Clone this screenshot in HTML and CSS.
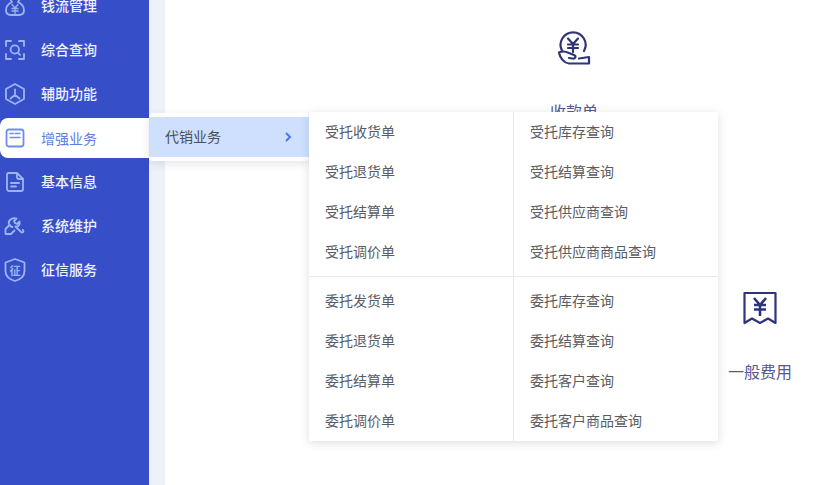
FILE: index.html
```html
<!DOCTYPE html>
<html lang="zh">
<head>
<meta charset="utf-8">
<title>增强业务</title>
<link rel="stylesheet" href="styles.css">
</head>
<body>
<div class="app">
  <nav class="sidebar">
    <a class="nav-item"><svg class="nav-icon" viewBox="0 0 22 22"><path d="M8 7C4 9 2 11.500 2 15c0 3 2 5 5 5h8c3 0 5-2 5-5 0-3.500-2-6-6-8l2-3H6Z"/><path class="fine" d="m8 9.500 3 3.500 3-3.500M8 13.500h6M8 16h6M11 13v5.500"/></svg><span>钱流管理</span></a>
    <a class="nav-item"><svg class="nav-icon" viewBox="0 0 22 22"><path d="M7 2H2v5M15 2h5v5M2 15v5h5M20 15v5h-5"/><circle cx="10.800" cy="10.500" r="4.200"/><path d="m14 13.800 2 2"/></svg><span>综合查询</span></a>
    <a class="nav-item"><svg class="nav-icon" viewBox="0 0 22 22"><path d="m11 1 9 5v10l-9 5-9-5V6Z"/><path d="M11 6.500V12M11 12l-4.500 3.500M11 12l4.500 3.500"/></svg><span>辅助功能</span></a>
    <a class="nav-item is-active"><span class="active-pill"><svg class="nav-icon" viewBox="0 0 22 22"><rect x="2.500" y="2.500" width="17" height="17" rx="2.500"/><path class="fine" d="M6 6.500h3.300M11 6.500h5M6 10.500h10"/></svg><span>增强业务</span></span></a>
    <a class="nav-item"><svg class="nav-icon" viewBox="0 0 22 22"><path d="M4.500 2H13l6 6v10a2 2 0 0 1-2 2H5a2 2 0 0 1-2-2V3.500A1.500 1.500 0 0 1 4.500 2Z"/><path d="M13 2.500V6a2 2 0 0 0 2 2h4M7 12h8M7 15.500h5"/></svg><span>基本信息</span></a>
    <a class="nav-item"><svg class="nav-icon" viewBox="0 0 22 22"><path d="m12.500 3.500-2.500 2.500 1 2 2 1 2.500-2.500c1 3-1.500 5.500-4 5L17 17c1.500 1.500 3.300-.5 2-2l-.2-.2M8.500 12C5 11.500 3.500 7 6 5c2-2 4.500-2 6.500-1.500"/><path d="M5.500 10 1.500 14v5H7l3.500-3.500"/></svg><span>系统维护</span></a>
    <a class="nav-item"><svg class="nav-icon nav-icon-tall" viewBox="0 0 22 24"><path d="m11 1 9.500 3.500V13c0 5-4.500 8.500-9.500 10-5-1.500-9.500-5-9.500-10V4.500Z"/><text class="badge-char" x="11" y="16.500">征</text></svg><span>征信服务</span></a>
  </nav>
  <div class="gutter"></div>
  <main class="content">
    <section class="shortcut shortcut-receipt">
      <svg class="shortcut-icon" viewBox="0 0 34 34"><path d="M5.200 20A12.500 12.500 0 1 1 27 20"/><path d="m11 7.500 5 5.500 5-5.500M11 13.500h10M11 17h10M16 13v8"/><path d="M2 21.500c3-1.500 7-1 10 .5l5 2c2.500 1 1.500 4-1.500 3.500L12 27M2 21.500C3 27 7 32 12 32.500h20V26l-10 1.500"/></svg>
      <span>收款单</span>
    </section>
    <section class="shortcut shortcut-expense">
      <svg class="shortcut-icon" viewBox="0 0 34 34"><path d="M1.500 2h31v30L25 27.500 17 32l-8-4.500L1.500 32Z"/><path class="yen-bold" d="m11 7 6 7 6-7M11 14h12M11 18.500h12M17 14v11"/></svg>
      <span>一般费用</span>
    </section>
  </main>
  <div class="flyout">
    <div class="flyout-row">
      <span class="flyout-label">代销业务</span>
      <svg class="chevron" viewBox="0 0 8 10"><path d="m2 1 4 4-4 4"/></svg>
    </div>
  </div>
  <div class="panel">
    <div class="panel-section">
      <div class="panel-col">
        <a>受托收货单</a><a>受托退货单</a><a>受托结算单</a><a>受托调价单</a>
      </div>
      <div class="panel-col">
        <a>受托库存查询</a><a>受托结算查询</a><a>受托供应商查询</a><a>受托供应商商品查询</a>
      </div>
    </div>
    <div class="panel-section panel-section-lower">
      <div class="panel-col">
        <a>委托发货单</a><a>委托退货单</a><a>委托结算单</a><a>委托调价单</a>
      </div>
      <div class="panel-col">
        <a>委托库存查询</a><a>委托结算查询</a><a>委托客户查询</a><a>委托客户商品查询</a>
      </div>
    </div>
  </div>
</div>
</body>
</html>
```
FILE: styles.css
```css
* { box-sizing: border-box; }
html, body { margin: 0; height: 100%; overflow: hidden; background: #fff; }
body { font-family: "Noto Sans CJK SC", "Noto Sans", sans-serif; font-size: 14px; }
.app { position: relative; display: flex; width: 824px; height: 485px; overflow: hidden; }

.sidebar { flex: 0 0 149px; height: 485px; background: #364fc9; overflow: hidden; display: flex; flex-direction: column; }
.nav-item { flex: 0 0 44px; display: flex; align-items: center; gap: 15px; padding-left: 4px; color: #eef1ff; font-weight: 500; line-height: 20px; }
.nav-item:first-child { margin-top: -16px; }
.nav-item > span:last-child { padding-bottom: 2px; }
.nav-icon { width: 22px; height: 22px; flex: none; fill: none; stroke: #9db4ee; stroke-width: 1.800; stroke-linecap: round; stroke-linejoin: round; }
.nav-icon .fine { stroke-width: 1.300; }
.nav-icon-tall { height: 24px; }
.badge-char { font-size: 11px; font-weight: 700; fill: #9db4ee; stroke: none; text-anchor: middle; }
.nav-item.is-active { padding: 2px 0; }
.nav-item.is-active > span:last-child { padding: 0 0 0 4px; }
.active-pill { flex: 1; height: 40px; background: #fff; border-radius: 8px 0 0 8px; display: flex; align-items: center; gap: 15px; color: #5f7de8; font-weight: 400; }
.active-pill .nav-icon { stroke: #6f8df0; }

.gutter { flex: 0 0 16px; background: #eef1f7; }

.content { flex: 1; display: grid; grid-template-columns: 316px 186px 186px; grid-template-rows: 260px 225px; }
.shortcut { display: flex; flex-direction: column; align-items: center; padding-top: 31px; color: #555a8a; font-size: 16px; line-height: 24px; }
.shortcut-receipt { grid-column: 2; grid-row: 1; }
.shortcut-expense { grid-column: 3; grid-row: 2; }
.shortcut-icon { width: 34px; height: 34px; flex: none; margin-bottom: 34px; fill: none; stroke: #2f3478; stroke-width: 2.200; stroke-linejoin: round; stroke-linecap: round; }
.shortcut-icon .yen-bold { stroke-width: 2.600; stroke-linecap: butt; }

.flyout { position: absolute; left: 149px; top: 113px; width: 160px; height: 48px; padding: 4px 0; background: #fff; border-radius: 4px; box-shadow: 0 3px 8px rgba(40, 50, 90, 0.12); }
.flyout-row { height: 40px; display: flex; align-items: center; justify-content: space-between; padding: 0 17px 0 16px; background: #cee0fd; color: #4b4f58; }
.flyout-label { padding-bottom: 2px; }
.chevron { width: 8px; height: 10px; fill: none; stroke: #4a78e8; stroke-width: 2; }

.panel { position: absolute; left: 309px; top: 112px; width: 409px; height: 329px; background: #fff; border-radius: 2px; box-shadow: 0 2px 10px rgba(40, 50, 90, 0.16); display: flex; flex-direction: column; color: #5a5c61; font-size: 14px; }
.panel-section { display: grid; grid-template-columns: 204px 1fr; height: 165px; border-bottom: 1px solid #e8e9ec; }
.panel-section-lower { height: 164px; padding-top: 4px; border-bottom: 0; }
.panel-col { display: flex; flex-direction: column; }
.panel-col + .panel-col { border-left: 1px solid #e8e9ec; }
.panel-section-lower .panel-col + .panel-col { margin-top: -4px; padding-top: 4px; }
.panel-col a { flex: 0 0 40px; display: flex; align-items: center; padding-left: 16px; padding-bottom: 2px; }
```
